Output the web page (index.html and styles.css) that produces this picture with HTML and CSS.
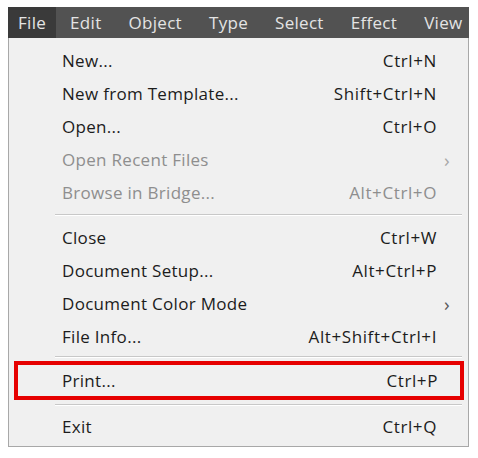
FILE: index.html
```html
<!DOCTYPE html>
<html>
<head>
<meta charset="utf-8">
<link rel="stylesheet" href="styles.css">
</head>
<body>
<div class="wrap">
  <div class="menubar">
    <span class="top active">File</span>
    <span class="top">Edit</span>
    <span class="top">Object</span>
    <span class="top">Type</span>
    <span class="top">Select</span>
    <span class="top">Effect</span>
    <span class="top">View</span>
  </div>
  <div class="panel">
    <div class="item"><span class="label">New...</span><span class="key">Ctrl+N</span></div>
    <div class="item"><span class="label">New from Template...</span><span class="key">Shift+Ctrl+N</span></div>
    <div class="item"><span class="label">Open...</span><span class="key">Ctrl+O</span></div>
    <div class="item disabled"><span class="label">Open Recent Files</span><span class="arrow">&#x203A;</span></div>
    <div class="item disabled"><span class="label">Browse in Bridge...</span><span class="key">Alt+Ctrl+O</span></div>
    <div class="sep"></div>
    <div class="item"><span class="label">Close</span><span class="key">Ctrl+W</span></div>
    <div class="item"><span class="label">Document Setup...</span><span class="key">Alt+Ctrl+P</span></div>
    <div class="item"><span class="label">Document Color Mode</span><span class="arrow">&#x203A;</span></div>
    <div class="item"><span class="label">File Info...</span><span class="key">Alt+Shift+Ctrl+I</span></div>
    <div class="sep sep-a"></div>
    <div class="item highlight"><span class="label">Print...</span><span class="key">Ctrl+P</span></div>
    <div class="sep sep-b"></div>
    <div class="item"><span class="label">Exit</span><span class="key">Ctrl+Q</span></div>
  </div>
</div>
</body>
</html>
```
FILE: styles.css
```css
html, body {
  margin: 0;
  padding: 0;
  background: #ffffff;
}
body {
  font-family: "Open Sans", "Noto Sans", sans-serif;
  color: #1c1c1c;
}
.wrap {
  padding: 7px 0 0 8px;
  width: 461px;
}
.menubar {
  display: flex;
  height: 31px;
  background: #525252;
  align-items: stretch;
  overflow: hidden;
}
.top {
  display: flex;
  align-items: center;
  color: #e4e4e4;
  font-size: 17px;
  letter-spacing: 0.3px;
  padding: 0 14px 0 13px;
  white-space: nowrap;
}
.top.active {
  background: #3a3a3a;
  padding: 0 10px;
  width: 32px;
  margin-right: 1px;
}
.panel {
  background: #f0f0f0;
  border: 1px solid #a8a8a8;
  border-top: none;
  padding: 6px 0 3px 0;
  height: 409px;
  box-sizing: border-box;
}
.item {
  display: flex;
  align-items: center;
  height: 33px;
  padding: 0 31px 0 53px;
  font-size: 17px;
  letter-spacing: 0.3px;
}
.label {
  flex: 1;
}
.key {
  text-align: right;
  letter-spacing: 0.6px;
}
.arrow {
  margin-right: -13px;
  font-size: 19px;
  color: #5a5a5a;
}
.disabled {
  color: #8e8e8e;
}
.disabled .arrow {
  color: #a8a8a8;
}
.sep {
  height: 1px;
  background: #c8c8c8;
  border-bottom: 1px solid #ffffff;
  margin: 5px 6px 5px 46px;
}
.sep-a {
  margin-top: 3px;
  margin-bottom: 3px;
}
.sep-b {
  margin-top: 4px;
  margin-bottom: 4px;
}
.highlight {
  box-sizing: border-box;
  height: 39px;
  border: 4px solid #e60000;
  margin: 0 4px 0 5px;
  padding: 0 22px 0 44px;
}
```
